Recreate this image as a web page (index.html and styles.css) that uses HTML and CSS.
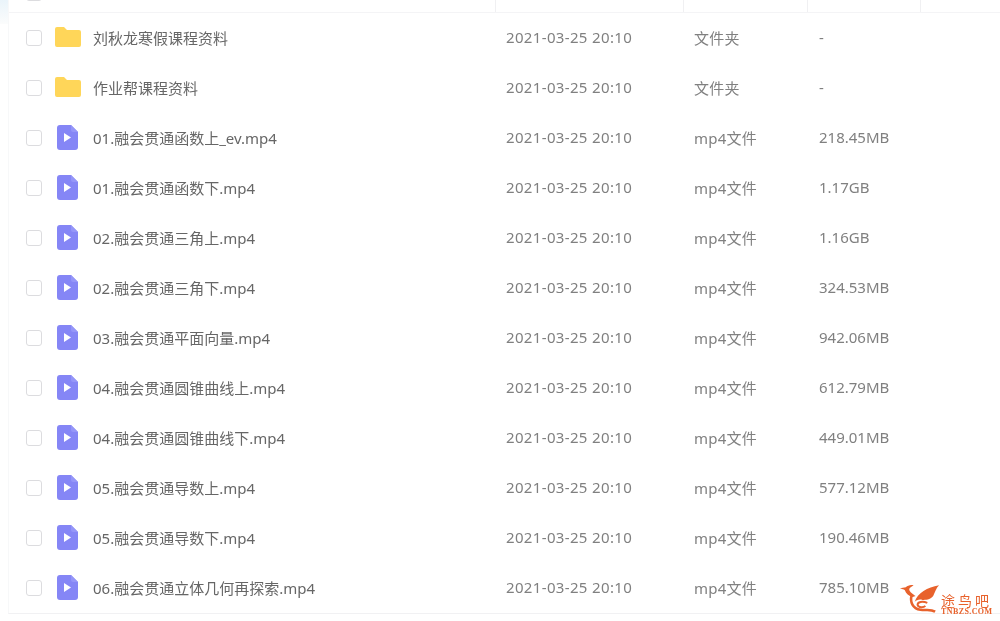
FILE: index.html
```html
<!DOCTYPE html>
<html lang="zh-CN">
<head>
  <meta charset="UTF-8">
  <title>文件列表</title>
  <link rel="stylesheet" href="styles.css">
</head>
<body>
  <svg class="icon-defs">
    <symbol id="folder" viewBox="0 0 26 20">
      <path d="M0 2a2 2 0 0 1 2-2h7l3 3h12a2 2 0 0 1 2 2v13a2 2 0 0 1-2 2H2a2 2 0 0 1-2-2z" fill="#ffd659"/>
    </symbol>
    <symbol id="video" viewBox="0 0 21 25">
      <path d="M3 0h11l7 7v15a3 3 0 0 1-3 3H3a3 3 0 0 1-3-3V3a3 3 0 0 1 3-3z" fill="#8586f6"/>
      <path d="M14 0l7 7h-5a2 2 0 0 1-2-2z" fill="#9596f8"/>
      <path d="M7 8l7 4.5L7 17z" fill="#fff"/>
    </symbol>
  </svg>

  <div class="file-panel">
    <div class="list-head">
      <div class="head-cell head-name"><span class="check"></span><span class="head-label">文件名</span></div>
      <div class="head-cell head-time"><span class="head-label">修改时间</span></div>
      <div class="head-cell head-type"><span class="head-label">类型</span></div>
      <div class="head-cell head-size"><span class="head-label">大小</span></div>
      <div class="head-cell head-rest"></div>
    </div>

    <div class="file-row">
      <span class="check"></span>
      <svg class="icon-folder"><use href="#folder"/></svg>
      <span class="name">刘秋龙寒假课程资料</span>
      <span class="time">2021-03-25 20:10</span>
      <span class="type">文件夹</span>
      <span class="size">-</span>
    </div>
    <div class="file-row">
      <span class="check"></span>
      <svg class="icon-folder"><use href="#folder"/></svg>
      <span class="name">作业帮课程资料</span>
      <span class="time">2021-03-25 20:10</span>
      <span class="type">文件夹</span>
      <span class="size">-</span>
    </div>
    <div class="file-row">
      <span class="check"></span>
      <svg class="icon-video"><use href="#video"/></svg>
      <span class="name">01.融会贯通函数上_ev.mp4</span>
      <span class="time">2021-03-25 20:10</span>
      <span class="type">mp4文件</span>
      <span class="size">218.45MB</span>
    </div>
    <div class="file-row">
      <span class="check"></span>
      <svg class="icon-video"><use href="#video"/></svg>
      <span class="name">01.融会贯通函数下.mp4</span>
      <span class="time">2021-03-25 20:10</span>
      <span class="type">mp4文件</span>
      <span class="size">1.17GB</span>
    </div>
    <div class="file-row">
      <span class="check"></span>
      <svg class="icon-video"><use href="#video"/></svg>
      <span class="name">02.融会贯通三角上.mp4</span>
      <span class="time">2021-03-25 20:10</span>
      <span class="type">mp4文件</span>
      <span class="size">1.16GB</span>
    </div>
    <div class="file-row">
      <span class="check"></span>
      <svg class="icon-video"><use href="#video"/></svg>
      <span class="name">02.融会贯通三角下.mp4</span>
      <span class="time">2021-03-25 20:10</span>
      <span class="type">mp4文件</span>
      <span class="size">324.53MB</span>
    </div>
    <div class="file-row">
      <span class="check"></span>
      <svg class="icon-video"><use href="#video"/></svg>
      <span class="name">03.融会贯通平面向量.mp4</span>
      <span class="time">2021-03-25 20:10</span>
      <span class="type">mp4文件</span>
      <span class="size">942.06MB</span>
    </div>
    <div class="file-row">
      <span class="check"></span>
      <svg class="icon-video"><use href="#video"/></svg>
      <span class="name">04.融会贯通圆锥曲线上.mp4</span>
      <span class="time">2021-03-25 20:10</span>
      <span class="type">mp4文件</span>
      <span class="size">612.79MB</span>
    </div>
    <div class="file-row">
      <span class="check"></span>
      <svg class="icon-video"><use href="#video"/></svg>
      <span class="name">04.融会贯通圆锥曲线下.mp4</span>
      <span class="time">2021-03-25 20:10</span>
      <span class="type">mp4文件</span>
      <span class="size">449.01MB</span>
    </div>
    <div class="file-row">
      <span class="check"></span>
      <svg class="icon-video"><use href="#video"/></svg>
      <span class="name">05.融会贯通导数上.mp4</span>
      <span class="time">2021-03-25 20:10</span>
      <span class="type">mp4文件</span>
      <span class="size">577.12MB</span>
    </div>
    <div class="file-row">
      <span class="check"></span>
      <svg class="icon-video"><use href="#video"/></svg>
      <span class="name">05.融会贯通导数下.mp4</span>
      <span class="time">2021-03-25 20:10</span>
      <span class="type">mp4文件</span>
      <span class="size">190.46MB</span>
    </div>
    <div class="file-row">
      <span class="check"></span>
      <svg class="icon-video"><use href="#video"/></svg>
      <span class="name">06.融会贯通立体几何再探索.mp4</span>
      <span class="time">2021-03-25 20:10</span>
      <span class="type">mp4文件</span>
      <span class="size">785.10MB</span>
    </div>
  </div>

  <!-- watermark -->
  <div class="watermark">
    <svg class="wm-bird" viewBox="0 0 44 32">
      <path d="M2 6L8 5C10 3 13 2 16 3L13 5C11 6 11 8 13 10C15 12 17 13 18 14L15 15C11 14 8 11 7 8C6 7 4 7 2 6z" fill="#e8622c"/>
      <path d="M17 20C20 11 30 5 42 3C39 6 38 10 36 14C33 18 28 18 25 18C22 17 19 18 17 20z" fill="#e8622c"/>
      <path d="M14 13C12 20 15 27 23 28C29 29 33 27 38 30" fill="none" stroke="#e8622c" stroke-width="2.6"/>
      <path d="M30 21C25 19 20 20 20 23C21 26 26 26 28 24" fill="none" stroke="#e8622c" stroke-width="2"/>
    </svg>
    <div class="wm-text">
      <span class="wm-title">途鸟吧</span>
      <span class="wm-url">TNBZS.COM</span>
    </div>
  </div>
</body>
</html>
```

FILE: styles.css
```css
* {
  margin: 0;
  padding: 0;
  box-sizing: border-box;
}

html, body {
  height: 100%;
  overflow: hidden;
}

body {
  background: #fff linear-gradient(#eaf4fa, #fbfcfc) no-repeat 0 0 / 8px 24px;
  font-family: "Noto Sans", "Noto Sans CJK SC", sans-serif;
  color: #666;
  font-size: 15px;
}

.icon-defs {
  display: none;
}

.file-panel {
  height: 614px;
  margin-left: 8px;
  border-left: 1px solid #f7f8f9;
  border-bottom: 1px solid #f1f1f3;
  filter: blur(0.4px);
}

.list-head {
  display: flex;
  height: 13px;
  border-bottom: 1px solid #f4f4f6;
  overflow: hidden;
}

.head-cell {
  display: flex;
  align-items: flex-end;
  gap: 20px;
  height: 12px;
  padding-left: 10px;
  border-right: 1px solid #f0f0f2;
  color: #999;
  font-size: 14px;
  line-height: 16px;
}

.head-label {
  transform: translateY(-11px);
}

.head-name { width: 487px; padding-left: 17px; }
.head-time { width: 188px; }
.head-type { width: 124px; }
.head-size { width: 113px; }
.head-rest { flex: 1; border-right: none; }

.file-row {
  display: flex;
  align-items: center;
  height: 50px;
}

.check {
  flex: none;
  width: 16px;
  height: 16px;
  margin-left: 17px;
  border: 1px solid #dcdcdf;
  border-radius: 3px;
  background: #fff;
}

.head-name .check {
  margin-left: 0;
  transform: translateY(-11px);
}

.icon-folder {
  flex: none;
  width: 26px;
  height: 20px;
  margin-left: 13px;
  margin-top: -3px;
}

.icon-video {
  flex: none;
  width: 21px;
  height: 25px;
  margin-left: 15px;
  margin-right: 3px;
  margin-top: -1px;
}

.name {
  flex: none;
  width: 413px;
  margin-left: 12px;
  padding-bottom: 2px;
}

.file-row .time,
.file-row .type,
.file-row .size {
  flex: none;
  color: #808080;
  padding-bottom: 2px;
}

.time { width: 188px; letter-spacing: 0.35px; }
.type { width: 125px; letter-spacing: 0.2px; }
.size { width: 100px; }

.watermark {
  position: absolute;
  left: 898px;
  top: 582px;
  display: flex;
  align-items: flex-end;
  filter: blur(0.3px);
}

.wm-bird {
  flex: none;
  width: 43px;
  height: 32px;
}

.wm-text {
  display: flex;
  flex-direction: column;
  width: 52px;
  margin-bottom: -1px;
  color: #e8622c;
}

.wm-title {
  font-size: 14px;
  line-height: 15px;
  letter-spacing: 3px;
  white-space: nowrap;
}

.wm-url {
  font-family: "Liberation Serif", serif;
  font-size: 8px;
  font-weight: bold;
  line-height: 7px;
  letter-spacing: 0.4px;
  white-space: nowrap;
}
```
